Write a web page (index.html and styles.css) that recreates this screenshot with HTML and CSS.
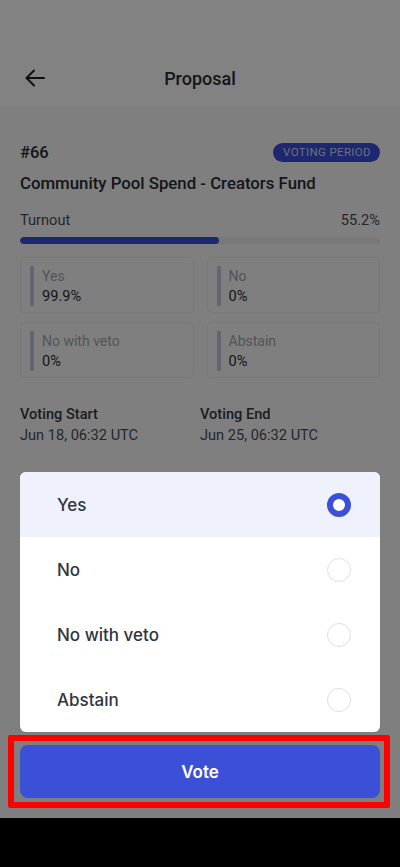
FILE: index.html
```html
<!DOCTYPE html>
<html lang="en">
<head>
<meta charset="utf-8">
<title>Proposal</title>
<link rel="stylesheet" href="styles.css">
</head>
<body>
<div class="app">
  <header class="header">
    <div class="header-bar">
      <svg class="back" width="24" height="24" viewBox="0 0 24 24" fill="none" stroke="#1d1f26" stroke-width="2" stroke-linecap="round" stroke-linejoin="round">
        <path d="M21 12H3.5M11 4.5L3.5 12L11 19.5"/>
      </svg>
      <div class="title">Proposal</div>
    </div>
  </header>
  <main class="content">
    <div class="info-row">
      <span class="pid">#66</span>
      <span class="badge">VOTING PERIOD</span>
    </div>
    <div class="ptitle">Community Pool Spend - Creators Fund</div>
    <div class="turnout-row">
      <span>Turnout</span>
      <span>55.2%</span>
    </div>
    <div class="track"><div class="fill" style="width:55.2%"></div></div>
    <div class="grid">
      <div class="box"><div class="bar"></div><div class="box-text"><div class="lbl">Yes</div><div class="val">99.9%</div></div></div>
      <div class="box"><div class="bar"></div><div class="box-text"><div class="lbl">No</div><div class="val">0%</div></div></div>
      <div class="box"><div class="bar"></div><div class="box-text"><div class="lbl">No with veto</div><div class="val">0%</div></div></div>
      <div class="box"><div class="bar"></div><div class="box-text"><div class="lbl">Abstain</div><div class="val">0%</div></div></div>
    </div>
    <div class="dates">
      <div class="date-col"><div class="dh">Voting Start</div><div class="dv">Jun 18, 06:32 UTC</div></div>
      <div class="date-col"><div class="dh">Voting End</div><div class="dv">Jun 25, 06:32 UTC</div></div>
    </div>
  </main>
  <div class="overlay"></div>
  <div class="sheet">
    <div class="options">
      <div class="opt selected"><span>Yes</span><span class="radio on"></span></div>
      <div class="opt"><span>No</span><span class="radio"></span></div>
      <div class="opt"><span>No with veto</span><span class="radio"></span></div>
      <div class="opt"><span>Abstain</span><span class="radio"></span></div>
    </div>
    <button class="vote">Vote</button>
  </div>
  <div class="annot"></div>
</div>
<div class="navbar"></div>
</body>
</html>
```

FILE: styles.css
```css
* { box-sizing: border-box; }
html, body { margin: 0; padding: 0; }
body {
  width: 400px;
  height: 867px;
  overflow: hidden;
  font-family: Roboto, "Noto Sans", sans-serif;
  background: #000;
}
.app {
  position: relative;
  height: 818px;
  background: #fafafc;
  overflow: hidden;
}
.header {
  height: 106px;
  padding-top: 50px;
  background: #ffffff;
}
.header-bar {
  position: relative;
  height: 56px;
  display: flex;
  align-items: center;
  justify-content: center;
}
.back {
  position: absolute;
  left: 23px;
  top: 16px;
}
.title {
  font-size: 18px;
  font-weight: 500;
  color: #2a2c34;
}
.content {
  padding: 0 20px;
  color: #2a2c35;
}
.info-row {
  margin-top: 36px;
  height: 20px;
  display: flex;
  align-items: center;
  justify-content: space-between;
}
.pid {
  font-size: 16.5px;
  font-weight: 500;
  color: #2a2c34;
}
.badge {
  height: 19px;
  padding: 0 9px 0 10px;
  border-radius: 10px;
  background: #3b4fd7;
  color: #d4d9f6;
  font-size: 11.5px;
  letter-spacing: 0.35px;
  display: flex;
  align-items: center;
}
.ptitle {
  margin-top: 10px;
  line-height: 22px;
  font-size: 16.8px;
  font-weight: 500;
  color: #2a2c34;
}
.turnout-row {
  margin-top: 16px;
  line-height: 20px;
  font-size: 14.6px;
  color: #4a4c55;
  display: flex;
  justify-content: space-between;
}
.track {
  margin-top: 7px;
  height: 7px;
  border-radius: 4px;
  background: #ebebf0;
  overflow: hidden;
}
.fill {
  height: 100%;
  border-radius: 4px;
  background: #3b4fd7;
}
.grid {
  margin-top: 13px;
  display: grid;
  grid-template-columns: 1fr 1fr;
  column-gap: 13px;
  row-gap: 9px;
}
.box {
  height: 56px;
  border: 1px solid #ececf0;
  border-radius: 4px;
  padding: 8px 9px 6px;
  display: flex;
  gap: 8px;
}
.bar {
  width: 4px;
  height: 40px;
  background: #c3c6e2;
  border-radius: 1px;
}
.lbl {
  font-size: 14px;
  line-height: 20px;
  color: #a3a5ad;
}
.val {
  font-size: 14.6px;
  line-height: 20px;
  color: #2a2c35;
}
.dates {
  margin-top: 26px;
  display: grid;
  grid-template-columns: 180px 1fr;
}
.dh {
  font-size: 14.6px;
  line-height: 21px;
  font-weight: 500;
  color: #383a43;
}
.dv {
  font-size: 14.6px;
  line-height: 21px;
  color: #4a4c55;
}
.overlay {
  position: absolute;
  inset: 0;
  background: rgba(0, 0, 0, 0.49);
}
.sheet {
  position: absolute;
  left: 20px;
  right: 20px;
  bottom: 20px;
  display: flex;
  flex-direction: column;
  gap: 13px;
  font-family: Inter, Roboto, sans-serif;
}
.options {
  background: #fff;
  border-radius: 6px;
  overflow: hidden;
}
.opt {
  height: 65px;
  padding: 0 29px 0 37px;
  display: flex;
  align-items: center;
  justify-content: space-between;
  font-size: 17px;
  font-weight: 500;
  color: #2f3542;
}
.opt.selected {
  background: #eff1fd;
}
.radio {
  width: 24px;
  height: 24px;
  border-radius: 50%;
  border: 1px solid #dedfe5;
  background: #fff;
}
.radio.on {
  border: 6px solid #3b4fd7;
}
.vote {
  height: 53px;
  border: none;
  border-radius: 8px;
  background: #3b4fd7;
  color: #fff;
  font-family: Inter, Roboto, sans-serif;
  font-size: 17px;
  font-weight: 600;
}
.annot {
  position: absolute;
  left: 8px;
  top: 735px;
  width: 382px;
  height: 73px;
  border: 6px solid #ff0000;
  border-radius: 2px;
}
.navbar {
  height: 49px;
  background: #000;
}
```
